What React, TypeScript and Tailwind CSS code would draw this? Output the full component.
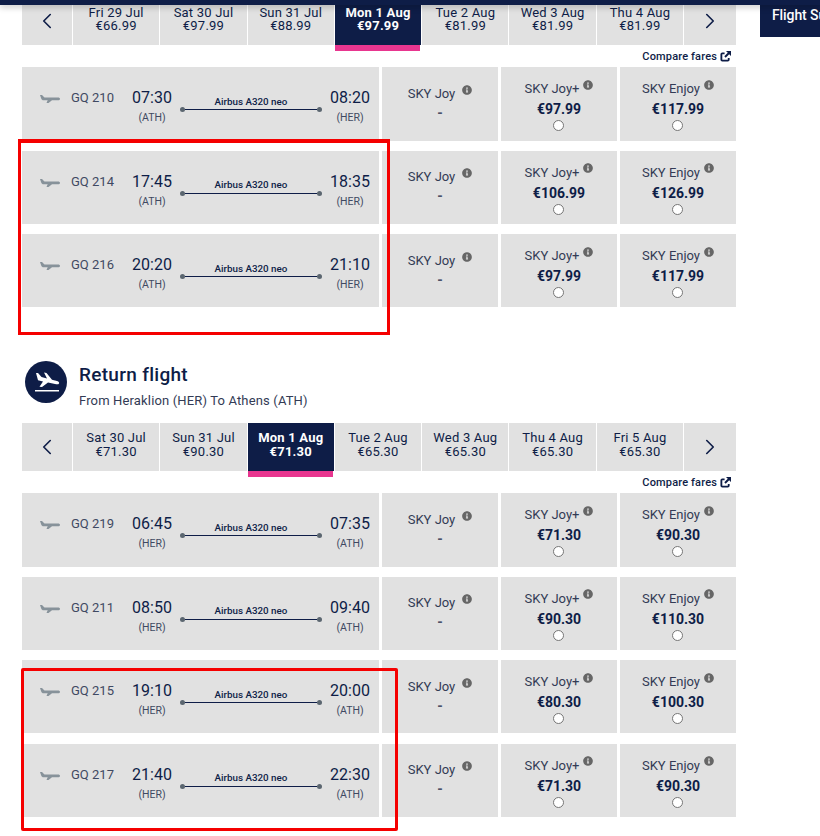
import { ChevronLeft, ChevronRight } from 'lucide-react';
import { FaInfoCircle } from 'react-icons/fa';

type DateCell = { label: string; price: string; active?: boolean };
type Flight = {
  code: string;
  dep: string;
  arr: string;
  from: string;
  to: string;
  joyPlus: string;
  enjoy: string;
};

const outDates: DateCell[] = [
  { label: 'Fri 29 Jul', price: '€66.99' },
  { label: 'Sat 30 Jul', price: '€97.99' },
  { label: 'Sun 31 Jul', price: '€88.99' },
  { label: 'Mon 1 Aug', price: '€97.99', active: true },
  { label: 'Tue 2 Aug', price: '€81.99' },
  { label: 'Wed 3 Aug', price: '€81.99' },
  { label: 'Thu 4 Aug', price: '€81.99' },
];

const returnDates: DateCell[] = [
  { label: 'Sat 30 Jul', price: '€71.30' },
  { label: 'Sun 31 Jul', price: '€90.30' },
  { label: 'Mon 1 Aug', price: '€71.30', active: true },
  { label: 'Tue 2 Aug', price: '€65.30' },
  { label: 'Wed 3 Aug', price: '€65.30' },
  { label: 'Thu 4 Aug', price: '€65.30' },
  { label: 'Fri 5 Aug', price: '€65.30' },
];

const outFlights: Flight[] = [
  { code: 'GQ 210', dep: '07:30', arr: '08:20', from: 'ATH', to: 'HER', joyPlus: '€97.99', enjoy: '€117.99' },
  { code: 'GQ 214', dep: '17:45', arr: '18:35', from: 'ATH', to: 'HER', joyPlus: '€106.99', enjoy: '€126.99' },
  { code: 'GQ 216', dep: '20:20', arr: '21:10', from: 'ATH', to: 'HER', joyPlus: '€97.99', enjoy: '€117.99' },
];

const returnFlights: Flight[] = [
  { code: 'GQ 219', dep: '06:45', arr: '07:35', from: 'HER', to: 'ATH', joyPlus: '€71.30', enjoy: '€90.30' },
  { code: 'GQ 211', dep: '08:50', arr: '09:40', from: 'HER', to: 'ATH', joyPlus: '€90.30', enjoy: '€110.30' },
  { code: 'GQ 215', dep: '19:10', arr: '20:00', from: 'HER', to: 'ATH', joyPlus: '€80.30', enjoy: '€100.30' },
  { code: 'GQ 217', dep: '21:40', arr: '22:30', from: 'HER', to: 'ATH', joyPlus: '€71.30', enjoy: '€90.30' },
];

function PlaneIcon() {
  return (
    <svg viewBox="0 0 20 10" className="h-[10px] w-[20px] shrink-0 fill-[#87929a]">
      <path d="M0 1h2l2.500 2.600h13.500c1.300 0 2 .6 2 1.400s-.9 1.300-2 1.300h-6L8.500 9H6.500l1.200-2.700H3.500C2.500 6.300 1.500 5.600 1.200 4.500z" />
    </svg>
  );
}

function LandingIcon() {
  return (
    <svg viewBox="0 0 26 20" className="mt-[1px] ml-[1px] h-[20px] w-[26px] fill-white">
      <path d="M2 1h2l3.500 4 5.500 1.500L10 .5l2.500.5L18 7.800 23 9c2 .5 2.500 2 2 2.500-.5 1-2 1-4 .5l-7-1.500L8 15l-2.500-.2L9 9.500 4 8.200z" />
      <rect x="1" y="18" width="24" height="1.500" />
    </svg>
  );
}

function ExternalIcon() {
  return (
    <svg viewBox="0 0 12 12" className="h-[11px] w-[11px] shrink-0 text-[#0e1d47]">
      <path d="M5 2.500H2.500a1 1 0 0 0-1 1v6a1 1 0 0 0 1 1h6a1 1 0 0 0 1-1V7.500" fill="none" stroke="currentColor" strokeWidth="2" />
      <path d="M6.500 0H12v5.500L10 3.500 6.200 7.300 4.700 5.800 8.500 2z" fill="currentColor" />
    </svg>
  );
}

function DateBar({ dates }: { dates: DateCell[] }) {
  return (
    <div className="flex h-[48px] w-[714px] gap-px">
      <div className="flex w-[50px] items-center justify-center bg-[#e1e1e1]">
        <ChevronLeft size={26} strokeWidth={1.5} className="text-[#0e1d47]" />
      </div>
      {dates.map((d) =>
        d.active ? (
          <div key={d.label} className="relative w-[86.300px] bg-[#0e1d47] pt-[8.500px] text-center text-[13px] leading-[13.500px] font-bold tracking-[0.2px] text-white">
            <div>{d.label}</div>
            <div>{d.price}</div>
            <div className="absolute top-full left-0 h-[6px] w-[85px] bg-[#e8368f]" />
          </div>
        ) : (
          <div key={d.label} className="w-[86.300px] bg-[#e1e1e1] pt-[8.500px] text-center text-[13px] leading-[13.500px] tracking-[0.2px] text-[#0e1d47]">
            <div>{d.label}</div>
            <div>{d.price}</div>
          </div>
        ),
      )}
      <div className="flex flex-1 items-center justify-center bg-[#e1e1e1]">
        <ChevronRight size={26} strokeWidth={1.5} className="text-[#0e1d47]" />
      </div>
    </div>
  );
}

function CompareFares() {
  return (
    <div className="mt-[6px] mb-[5.400px] flex h-[11px] w-[709px] items-center justify-end gap-[3px] text-[11px] font-medium tracking-[0.15px] text-[#0e1d47]">
      <span className="relative top-[0.5px]">Compare fares</span>
      <ExternalIcon />
    </div>
  );
}

function FareCell({ name, price }: { name: string; price: string }) {
  return (
    <div className="flex w-[116px] flex-col items-center bg-[#e1e1e1] pt-[12px]">
      <div className="flex h-[20px] items-start text-[13px] leading-[20px] text-[#333b55]">
        <span>{name}</span>
        <FaInfoCircle size={10} className="mt-[0.500px] ml-[4px] text-[#666]" />
      </div>
      <div className="text-[14px] leading-[20px] font-bold text-[#0e1d47]">{price}</div>
      <div className="mt-[1px] mr-[1px] h-[11px] w-[11px] rounded-full border border-[#767676] bg-white" />
    </div>
  );
}

function FlightRow({ f }: { f: Flight }) {
  return (
    <div className="mb-[10.250px] flex h-[73.200px] gap-[3px]">
      <div className="flex w-[357px] bg-[#e1e1e1] pt-[22px] pl-[18px] text-[#0e1d47]">
        <div className="mt-[5px]">
          <PlaneIcon />
        </div>
        <div className="ml-[11px] w-[61px] text-[13px] leading-[18px] text-[#3f4962]">{f.code}</div>
        <div className="w-[40px] text-center">
          <div className="text-[16px] leading-[18px]">{f.dep}</div>
          <div className="mt-[4px] text-[10.500px] leading-[13px] text-[#3f4962]">({f.from})</div>
        </div>
        <div className="ml-[8px] flex w-[142px] flex-col items-center pt-[6.500px]">
          <div className="mb-[-0.5px] text-[9.800px] leading-[12px] font-medium">Airbus A320 neo</div>
          <div className="flex h-[5px] w-[142px] items-center">
            <span className="h-[5px] w-[5px] rounded-full bg-[#5b6670]" />
            <span className="h-px flex-1 bg-[#0e1d47]" />
            <span className="h-[5px] w-[5px] rounded-full bg-[#5b6670]" />
          </div>
        </div>
        <div className="ml-[8px] w-[40px] text-center">
          <div className="text-[16px] leading-[18px]">{f.arr}</div>
          <div className="mt-[4px] text-[10.500px] leading-[13px] text-[#3f4962]">({f.to})</div>
        </div>
      </div>
      <div className="flex w-[116px] flex-col items-center bg-[#e1e1e1] pt-[16.600px]">
        <div className="flex h-[20px] items-start text-[13px] leading-[20px] text-[#333b55]">
          <span>SKY Joy</span>
          <FaInfoCircle size={10} className="mt-[1px] ml-[7px] text-[#666]" />
        </div>
        <div className="text-[14px] leading-[18px] font-bold text-[#4a5268]">-</div>
      </div>
      <FareCell name="SKY Joy+" price={f.joyPlus} />
      <FareCell name="SKY Enjoy" price={f.enjoy} />
    </div>
  );
}

export default function App() {
  return (
    <div className="relative h-[836px] w-[820px] overflow-hidden bg-white font-['Roboto',sans-serif]">
      <div className="relative z-10 h-[5px] bg-[#0e1d47] shadow-[0_2px_6px_rgba(0,0,0,0.25)]" />
      <div className="flex">
        <main className="mt-[-8px] ml-[22px] w-[714px]">
          <DateBar dates={outDates} />
          <CompareFares />
          {outFlights.map((f) => (
            <FlightRow key={f.code} f={f} />
          ))}
          <section className="mt-[53.500px] flex h-[62px] items-start">
            <div className="ml-[3px] flex h-[42px] w-[42px] items-center justify-center rounded-full bg-[#0e1d47]">
              <LandingIcon />
            </div>
            <div className="ml-[12px]">
              <h2 className="text-[19px] leading-[28px] font-medium tracking-[0.3px] text-[#0e1d47]">Return flight</h2>
              <p className="mt-px text-[13px] leading-[22px] tracking-[0.15px] text-[#333b55]">From Heraklion (HER) To Athens (ATH)</p>
            </div>
          </section>
          <DateBar dates={returnDates} />
          <CompareFares />
          {returnFlights.map((f) => (
            <FlightRow key={f.code} f={f} />
          ))}
        </main>
        <aside className="ml-[24px] flex-1">
          <div className="h-[32px] overflow-hidden bg-[#0e1d47] pl-[12px] text-[14px] leading-[21px] font-medium tracking-[-0.1px] whitespace-nowrap text-white">
            Flight Summary
          </div>
        </aside>
      </div>
      {/* annotation boxes drawn over the screenshot */}
      <div className="absolute top-[139px] left-[18px] h-[196px] w-[372px] border-[3px] border-t-[4px] border-[#f50000]" />
      <div className="absolute top-[668px] left-[21px] h-[163px] w-[377px] rounded-[2px] border-[3px] border-[#f50000]" />
    </div>
  );
}
